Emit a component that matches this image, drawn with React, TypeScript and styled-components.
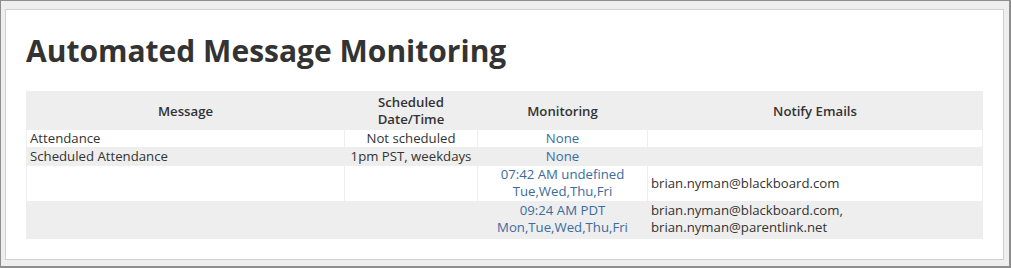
import React from "react";
import styled, { createGlobalStyle } from "styled-components";

const Global = createGlobalStyle`
  html, body { margin: 0; padding: 0; background: #eeeeee; }
  body { font-family: "Open Sans", "Liberation Sans", sans-serif; color: #333; }
`;

const Frame = styled.div`
  box-sizing: border-box;
  width: 1011px;
  height: 268px;
  border-style: solid;
  border-color: #8e8e8e;
  border-width: 1px 2px 2px 1px;
  background: #eeeeee;
  padding: 8px 5px 6px 4px;
`;

const Panel = styled.section`
  box-sizing: border-box;
  height: 251px;
  background: #fff;
  border: 1px solid #d0d0d0;
  padding: 21px 20px 0 20px;
`;

const Title = styled.h1`
  margin: 0 0 20px 0;
  font-size: 30px;
  line-height: 40px;
  font-weight: 700;
  color: #333;
`;

const Table = styled.table`
  width: 100%;
  border-collapse: collapse;
  font-size: 13.2px;
  line-height: 17px;
  color: #333;
`;

const Head = styled.th<{ $w?: number }>`
  box-sizing: border-box;
  background: #eeeeee;
  font-weight: 600;
  text-align: center;
  vertical-align: middle;
  padding: 2px 4px 1px 4px;
  border: 1px solid #eeeeee;
  width: ${(p) => (p.$w ? `${p.$w}px` : "auto")};
`;

const Row = styled.tr<{ $alt?: boolean }>`
  background: ${(p) => (p.$alt ? "#eeeeee" : "#ffffff")};
`;

const Cell = styled.td<{ $align?: "left" | "center"; $link?: boolean; $extra?: number }>`
  border: 1px solid #eeeeee;
  padding: 0 3px ${(p) => p.$extra ?? 0}px 3px;
  vertical-align: middle;
  text-align: ${(p) => p.$align ?? "left"};
  color: ${(p) => (p.$link ? "#3a6c9e" : "#333")};
  white-space: nowrap;
`;

type RowData = {
  message: string;
  schedule: string;
  monitoring: string[];
  emails: string[];
  extra: number;
};

const rows: RowData[] = [
  { message: "Attendance", schedule: "Not scheduled", monitoring: ["None"], emails: [], extra: 0 },
  { message: "Scheduled Attendance", schedule: "1pm PST, weekdays", monitoring: ["None"], emails: [], extra: 0 },
  {
    message: "",
    schedule: "",
    monitoring: ["07:42 AM undefined", "Tue,Wed,Thu,Fri"],
    emails: ["brian.nyman@blackboard.com"],
    extra: 1,
  },
  {
    message: "",
    schedule: "",
    monitoring: ["09:24 AM PDT", "Mon,Tue,Wed,Thu,Fri"],
    emails: ["brian.nyman@blackboard.com,", "brian.nyman@parentlink.net"],
    extra: 2,
  },
];

const lines = (items: string[]) =>
  items.map((t, i) => (
    <React.Fragment key={i}>
      {i > 0 && <br />}
      {t}
    </React.Fragment>
  ));

export default function App() {
  return (
    <>
      <Global />
      <Frame>
        <Panel>
          <Title>Automated Message Monitoring</Title>
          <Table>
            <thead>
              <tr>
                <Head $w={318}>Message</Head>
                <Head $w={133}>
                  Scheduled
                  <br />
                  Date/Time
                </Head>
                <Head $w={170}>Monitoring</Head>
                <Head>Notify Emails</Head>
              </tr>
            </thead>
            <tbody>
              {rows.map((r, i) => (
                <Row key={i} $alt={i % 2 === 1}>
                  <Cell $extra={r.extra}>{r.message}</Cell>
                  <Cell $align="center" $extra={r.extra}>
                    {r.schedule}
                  </Cell>
                  <Cell $align="center" $link $extra={r.extra}>
                    {lines(r.monitoring)}
                  </Cell>
                  <Cell $extra={r.extra}>{lines(r.emails)}</Cell>
                </Row>
              ))}
            </tbody>
          </Table>
        </Panel>
      </Frame>
    </>
  );
}
